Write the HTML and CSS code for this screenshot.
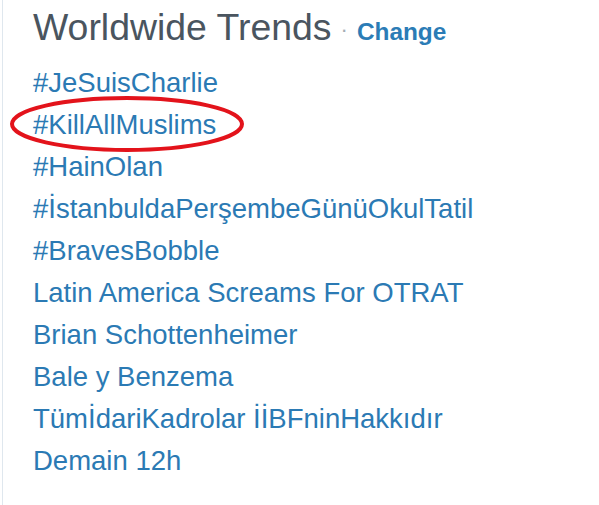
FILE: index.html
```html
<!DOCTYPE html>
<html>
<head>
<meta charset="utf-8">
<link rel="stylesheet" href="styles.css">
</head>
<body>
<div class="card">
  <div class="header">
    <h2 class="title">Worldwide Trends</h2>
    <span class="dot">·</span>
    <a class="change">Change</a>
  </div>
  <ul class="trends">
    <li><a>#JeSuisCharlie</a></li>
    <li class="circled"><a>#KillAllMuslims</a>
      <svg class="ring" width="240" height="62" viewBox="0 0 240 62"><ellipse cx="116" cy="28" rx="115" ry="26" fill="none" stroke="#e3131b" stroke-width="4"/></svg>
    </li>
    <li><a>#HainOlan</a></li>
    <li><a>#İstanbuldaPerşembeGünüOkulTatil</a></li>
    <li><a>#BravesBobble</a></li>
    <li><a>Latin America Screams For OTRAT</a></li>
    <li><a>Brian Schottenheimer</a></li>
    <li><a>Bale y Benzema</a></li>
    <li><a>TümİdariKadrolar İİBFninHakkıdır</a></li>
    <li><a>Demain 12h</a></li>
  </ul>
</div>
</body>
</html>
```

FILE: styles.css
```css
html, body {
  margin: 0;
  padding: 0;
  background: #ffffff;
}
body {
  padding-left: 2px;
  font-family: "Liberation Sans", Arial, sans-serif;
}
.card {
  border-left: 1px solid #dfe7ee;
  min-height: 505px;
  padding: 5px 0 0 30px;
  box-sizing: border-box;
}
.header {
  display: flex;
  align-items: baseline;
  height: 44px;
}
.title {
  margin: 0;
  font-size: 37.4px;
  font-weight: normal;
  line-height: 44px;
  color: #4a555f;
}
.dot {
  font-size: 22px;
  color: #a4adb4;
  margin: 0 9px 0 9px;
  position: relative;
  top: -3px;
}
.change {
  font-size: 24.4px;
  font-weight: bold;
  color: #2b7cb6;
}
.trends {
  list-style: none;
  margin: 13px 0 0 0;
  padding: 0;
}
.trends li {
  font-size: 27.5px;
  line-height: 42px;
  height: 42px;
  color: #2b7ab4;
  white-space: nowrap;
}
.circled {
  position: relative;
}
.ring {
  position: absolute;
  left: -22px;
  top: -8px;
  overflow: visible;
}
```
